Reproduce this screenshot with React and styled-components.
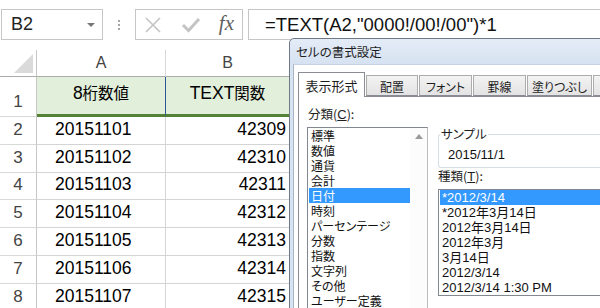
import React from 'react';
import styled, { createGlobalStyle } from 'styled-components';

const GlobalStyle = createGlobalStyle`
  html, body {
    margin: 0;
    padding: 0;
    background: #fff;
  }
  body {
    width: 600px;
    height: 308px;
    overflow: hidden;
    font-family: "Liberation Sans", "Noto Sans CJK JP", sans-serif;
  }
  * {
    box-sizing: border-box;
  }
`;

const rows = [
  ['20151101', 42309],
  ['20151102', 42310],
  ['20151103', 42311],
  ['20151104', 42312],
  ['20151105', 42313],
  ['20151106', 42314],
  ['20151107', 42315],
];

const categories = [
  '標準', '数値', '通貨', '会計', '日付', '時刻', 'パーセンテージ',
  '分数', '指数', '文字列', 'その他', 'ユーザー定義',
];

const formats = [
  '*2012/3/14', '*2012年3月14日', '2012年3月14日', '2012年3月',
  '3月14日', '2012/3/14', '2012/3/14 1:30 PM',
];

const tabs = [
  { label: '表示形式', width: 67, active: true },
  { label: '配置', width: 52 },
  { label: 'フォント', width: 53 },
  { label: '罫線', width: 53 },
  { label: '塗りつぶし', width: 65 },
  { label: '保護', width: 52 },
];

function App() {
  return (
    <Page>
      <GlobalStyle />
      <Toolbar>
        <NameBox>
          B2
          <DropArrow />
        </NameBox>
        <Grip>
          <i /><i /><i />
        </Grip>
        <IconBox>
          <svg width="20" height="18" viewBox="0 0 20 18">
            <path d="M3 2 L17 16 M17 2 L3 16" stroke="#c4c4c4" strokeWidth="1.6" fill="none" />
          </svg>
          <svg width="20" height="18" viewBox="0 0 20 18">
            <path d="M2 9 L7.5 14.5 L18 3" stroke="#c4c4c4" strokeWidth="3" fill="none" />
          </svg>
          <Fx>fx</Fx>
        </IconBox>
        <FormulaBox>=TEXT(A2,"0000!/00!/00")*1</FormulaBox>
      </Toolbar>

      <Sheet>
        <Corner>
          <svg width="19" height="19" viewBox="0 0 19 19">
            <path d="M19 0 L19 19 L0 19 Z" fill="#dadada" />
          </svg>
        </Corner>
        <ColHead>A</ColHead>
        <ColHead>B</ColHead>
        <ColHead $filler />

        <RowHead>1</RowHead>
        <HeadCell $line="#2f5597">
          <span>8<Kanji>桁数値</Kanji></span>
        </HeadCell>
        <HeadCell>
          <span>TEXT<Kanji>関数</Kanji></span>
        </HeadCell>
        <Cell />

        {rows.map(([num, serial], i) => (
          <React.Fragment key={num}>
            <RowHead>{i + 2}</RowHead>
            <Cell $indent={18}>{num}</Cell>
            <Cell $right>{serial}</Cell>
            <Cell />
          </React.Fragment>
        ))}
      </Sheet>

      <Dialog>
        <TitleBar>セルの書式設定</TitleBar>
        <DialogBody>
          <TabRow>
            {tabs.map((t) => (
              <Tab key={t.label} $active={t.active} $width={t.width}>
                {t.label}
              </Tab>
            ))}
          </TabRow>
          <TabPanel>
            <Column>
              <FieldLabel>
                分類(<u>C</u>):
              </FieldLabel>
              <CategoryList>
                <Items>
                  {categories.map((c) => (
                    <Item key={c} $selected={c === '日付'}>
                      {c}
                    </Item>
                  ))}
                </Items>
                <ScrollBar>
                  <svg width="8" height="5" viewBox="0 0 8 5">
                    <path d="M0 5 L4 0 L8 5 Z" fill="#9a9a9a" />
                  </svg>
                </ScrollBar>
              </CategoryList>
            </Column>
            <Column>
              <SampleGroup>
                <legend>サンプル</legend>
                <SampleText>2015/11/1</SampleText>
              </SampleGroup>
              <FieldLabel $latin>
                種類(<u>T</u>):
              </FieldLabel>
              <FormatList>
                {formats.map((f, i) => (
                  <FormatItem key={f} $selected={i === 0}>
                    {f}
                  </FormatItem>
                ))}
              </FormatList>
            </Column>
          </TabPanel>
        </DialogBody>
      </Dialog>
    </Page>
  );
}

export default App;

const Page = styled.div`
  position: relative;
  width: 600px;
  height: 308px;
  overflow: hidden;
  background: #fff;
`;

/* formula bar */

const Toolbar = styled.div`
  display: flex;
  height: 31px;
  margin-top: 9px;
`;

const NameBox = styled.div`
  position: relative;
  width: 102px;
  margin-left: 1px;
  display: flex;
  align-items: center;
  padding-left: 9px;
  border: 1px solid #c6c6c6;
  font-size: 18px;
  color: #222;
`;

const DropArrow = styled.span`
  position: absolute;
  right: 7px;
  top: 13px;
  width: 0;
  height: 0;
  border-left: 4px solid transparent;
  border-right: 4px solid transparent;
  border-top: 4px solid #777;
`;

const Grip = styled.div`
  width: 32px;
  display: flex;
  flex-direction: column;
  align-items: center;
  justify-content: center;
  gap: 2px;

  i {
    width: 2px;
    height: 2px;
    background: #a6a6a6;
  }
`;

const IconBox = styled.div`
  width: 108px;
  display: flex;
  align-items: center;
  justify-content: space-between;
  padding: 0 8px 0 7px;
  border: 1px solid #c6c6c6;
`;

const Fx = styled.span`
  font-family: "Liberation Serif", serif;
  font-style: italic;
  font-size: 21px;
  color: #5f5f5f;
  margin-top: -2px;
`;

const FormulaBox = styled.div`
  flex: 1;
  margin-left: 5px;
  margin-right: -20px;
  display: flex;
  align-items: center;
  padding-left: 16px;
  border: 1px solid #c6c6c6;
  font-size: 18.5px;
  color: #111;
  white-space: nowrap;
`;

/* worksheet */

const Sheet = styled.div`
  margin-top: 10px;
  display: grid;
  grid-template-columns: 37px 129px 124px 1fr;
  grid-template-rows: 27px 40px repeat(7, 27.8px);
`;

const Corner = styled.div`
  display: flex;
  align-items: flex-end;
  justify-content: flex-end;
  padding: 0 3px 3px 0;
  border-right: 1px solid #c6c6c6;
  border-bottom: 1px solid #ababab;
`;

const ColHead = styled.div`
  display: flex;
  align-items: center;
  justify-content: center;
  border-right: ${({ $filler }) => ($filler ? 'none' : '1px solid #d9d9d9')};
  border-bottom: 1px solid #ababab;
  font-size: 16px;
  color: #444;
`;

const RowHead = styled.div`
  display: flex;
  align-items: flex-end;
  justify-content: center;
  padding-bottom: 4px;
  border-right: 1px solid #c6c6c6;
  border-bottom: 1px solid #d9d9d9;
  font-size: 17px;
  line-height: 20px;
  color: #444;
`;

const Cell = styled.div`
  display: flex;
  align-items: flex-end;
  justify-content: ${({ $right }) => ($right ? 'flex-end' : 'flex-start')};
  padding: 0 ${({ $right }) => ($right ? '3px' : '0')} 5px ${({ $indent }) => $indent || 0}px;
  border-right: 1px solid #d4d4d4;
  border-bottom: 1px solid #d4d4d4;
  font-size: 17.5px;
  line-height: 20px;
  color: #000;
`;

const HeadCell = styled.div`
  display: flex;
  align-items: center;
  justify-content: center;
  padding-bottom: 4px;
  background: #e2efda;
  border-right: 1px solid ${({ $line }) => $line || '#d4d4d4'};
  border-bottom: 3px solid #548235;
  font-size: 17.5px;
  line-height: 20px;
  color: #000;
`;

const Kanji = styled.span`
  font-size: 15.5px;
`;

/* dialog window */

const Dialog = styled.div`
  position: absolute;
  left: 289px;
  top: 38px;
  width: 340px;
  height: 300px;
  display: flex;
  flex-direction: column;
  background: #d9e4f2;
  border: 1px solid #6e7886;
  border-radius: 5px 0 0 0;
  font-feature-settings: "palt";
`;

const TitleBar = styled.div`
  height: 25px;
  display: flex;
  align-items: center;
  padding-left: 6px;
  background: linear-gradient(#e4ecf7, #d6e2f1);
  border-radius: 5px 0 0 0;
  font-family: "Noto Sans CJK JP", sans-serif;
  font-size: 12.5px;
  color: #1e1e1e;
`;

const DialogBody = styled.div`
  flex: 1;
  margin-left: 3px;
  padding: 7px 0 0 4px;
  background: #fff;
  border-left: 1px solid #a9b4c2;
  border-top: 1px solid #c5d2e2;
`;

const TabRow = styled.div`
  display: flex;
  align-items: flex-end;
  height: 24px;
`;

const Tab = styled.div`
  flex: none;
  width: ${({ $width }) => $width}px;
  height: ${({ $active }) => ($active ? '25px' : '21px')};
  margin-right: 1px;
  margin-bottom: ${({ $active }) => ($active ? '-1px' : '0')};
  position: relative;
  display: flex;
  align-items: center;
  justify-content: center;
  padding-top: ${({ $active }) => ($active ? '0' : '1px')};
  background: ${({ $active }) => ($active ? '#fff' : 'linear-gradient(#f3f3f3, #e3e3e3)')};
  border: 1px solid ${({ $active }) => ($active ? '#898c95' : '#acacac')};
  border-bottom: ${({ $active }) => ($active ? 'none' : '1px solid #898c95')};
  font-family: "Noto Sans CJK JP", sans-serif;
  font-size: ${({ $active }) => ($active ? '13px' : '12px')};
  color: #1e1e1e;
  z-index: ${({ $active }) => ($active ? 1 : 0)};
`;

const TabPanel = styled.div`
  display: grid;
  grid-template-columns: 121px 1fr;
  column-gap: 10px;
  height: 230px;
  padding: 9px 0 0 8px;
  border-top: 1px solid #898c95;
  border-left: 1px solid #898c95;
`;

const Column = styled.div`
  display: flex;
  flex-direction: column;
  min-width: 0;
`;

const FieldLabel = styled.div`
  height: 16px;
  line-height: 16px;
  padding-left: ${({ $latin }) => ($latin ? '0' : '1px')};
  font-family: "Noto Sans CJK JP", sans-serif;
  font-size: 12.5px;
  color: #1e1e1e;

  u {
    font-family: "Liberation Sans", sans-serif;
    font-size: 13px;
  }
`;

const CategoryList = styled.div`
  margin-top: 5px;
  height: 200px;
  display: flex;
  border: 1px solid #828790;
  border-right-color: #bcbcbc;
`;

const Items = styled.div`
  flex: 1;
  padding-left: 1px;
`;

const Item = styled.div`
  height: 15px;
  line-height: 15px;
  padding-left: 2px;
  font-family: "Noto Sans CJK JP", sans-serif;
  font-size: 12px;
  color: ${({ $selected }) => ($selected ? '#fff' : '#111')};
  background: ${({ $selected }) => ($selected ? '#3399ff' : 'transparent')};
`;

const ScrollBar = styled.div`
  width: 17px;
  display: flex;
  justify-content: center;
  padding-top: 6px;
  background: #fcfcfc;
`;

const SampleGroup = styled.fieldset`
  margin: 20px 0 0 0;
  padding: 5px 9px 4px;
  border: 1px solid #d5dfe5;
  border-radius: 3px;
  border-right: none;

  legend {
    margin-left: -8px;
    padding: 0 1px;
    line-height: 16px;
    font-family: "Noto Sans CJK JP", sans-serif;
    font-size: 12.5px;
    color: #1e1e1e;
  }
`;

const SampleText = styled.div`
  height: 16px;
  line-height: 16px;
  font-size: 13px;
  color: #111;
`;

const FormatList = styled.div`
  margin-top: 5px;
  padding-left: 1px;
  border: 1px solid #828790;
  border-right: none;
`;

const FormatItem = styled.div`
  height: 15px;
  line-height: 15px;
  padding-left: 2px;
  font-size: 13px;
  white-space: nowrap;
  color: ${({ $selected }) => ($selected ? '#fff' : '#111')};
  background: ${({ $selected }) => ($selected ? '#3399ff' : 'transparent')};
`;
